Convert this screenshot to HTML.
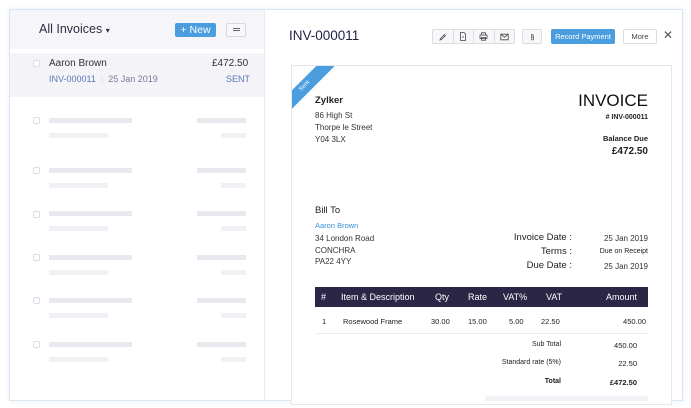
<!DOCTYPE html>
<html><head><meta charset="utf-8"><style>
*{margin:0;padding:0;box-sizing:border-box}
body{width:691px;height:408px;background:#fff;font-family:"Liberation Sans",sans-serif;position:relative;overflow:hidden;color:#222}
.a{position:absolute;white-space:nowrap}
.card{position:absolute;left:9px;top:9px;width:674px;height:392px;border:1px solid #dbe6f5;box-shadow:0 0 6px #e8eef8;background:#fff}
.sk{position:absolute;background:#e8e8ef;height:5px}
.sk2{position:absolute;background:#f0f0f5;height:5px}
.cb{position:absolute;width:7px;height:7px;border:1px solid #dcdcea;border-radius:2px;background:#fff}
.btn{position:absolute;top:29px;height:15px;border:1px solid #dcdce4;background:#f7f7fa;border-radius:2px}
.t{font-size:8px;color:#333}
.ic{flex:1;border-right:1px solid #dcdce4;display:flex;align-items:center;justify-content:center}
</style></head><body>
<div class="card"></div>
<div class="a" style="left:10px;top:10px;width:254px;height:39px;background:#f6f6fa"></div>
<div class="a" style="left:10px;top:53px;width:254px;height:44px;background:#f3f3f8"></div>
<div class="a" style="left:264px;top:10px;width:1px;height:390px;background:#ececf2"></div>
<div class="a" style="left:39px;top:22px;font-size:12.5px;color:#2c2c44">All Invoices <span style="font-size:8px">▾</span></div>
<div class="a" style="left:175px;top:23px;width:41px;height:14px;background:#4a9ee0;border-radius:2px;color:#fff;font-size:10.5px;line-height:14px;text-align:center">+ New</div>
<div class="a" style="left:226px;top:23px;width:20px;height:14px;border:1px solid #d8d8e0;background:#f8f8fa;border-radius:2px"><div style="position:absolute;left:6px;top:4px;width:7px;height:3px;border-top:1px solid #666;border-bottom:1px solid #666"></div></div>
<div class="cb" style="left:33px;top:60px"></div>
<div class="a" style="left:49px;top:58px;font-size:10px;color:#333">Aaron Brown</div>
<div class="a" style="left:212px;top:58px;font-size:10px;color:#333">£472.50</div>
<div class="a" style="left:49px;top:74px;font-size:9px;color:#5a78b8">INV-000011 <span style="color:#ddd">&nbsp;|&nbsp;</span> <span style="color:#7a7a99">25 Jan 2019</span></div>
<div class="a" style="left:226px;top:74px;font-size:9px;color:#5a78b8">SENT</div>

<div class="cb" style="left:33px;top:117px"></div><div class="sk" style="left:49px;top:118px;width:83px"></div><div class="sk2" style="left:49px;top:133px;width:59px"></div><div class="sk" style="left:197px;top:118px;width:49px"></div><div class="sk2" style="left:221px;top:133px;width:25px"></div>
<div class="cb" style="left:33px;top:167px"></div><div class="sk" style="left:49px;top:168px;width:83px"></div><div class="sk2" style="left:49px;top:183px;width:59px"></div><div class="sk" style="left:197px;top:168px;width:49px"></div><div class="sk2" style="left:221px;top:183px;width:25px"></div>
<div class="cb" style="left:33px;top:211px"></div><div class="sk" style="left:49px;top:211px;width:83px"></div><div class="sk2" style="left:49px;top:226px;width:59px"></div><div class="sk" style="left:197px;top:211px;width:49px"></div><div class="sk2" style="left:221px;top:226px;width:25px"></div>
<div class="cb" style="left:33px;top:254px"></div><div class="sk" style="left:49px;top:255px;width:83px"></div><div class="sk2" style="left:49px;top:270px;width:59px"></div><div class="sk" style="left:197px;top:255px;width:49px"></div><div class="sk2" style="left:221px;top:270px;width:25px"></div>
<div class="cb" style="left:33px;top:297px"></div><div class="sk" style="left:49px;top:298px;width:83px"></div><div class="sk2" style="left:49px;top:313px;width:59px"></div><div class="sk" style="left:197px;top:298px;width:49px"></div><div class="sk2" style="left:221px;top:313px;width:25px"></div>
<div class="cb" style="left:33px;top:341px"></div><div class="sk" style="left:49px;top:342px;width:83px"></div><div class="sk2" style="left:49px;top:357px;width:59px"></div><div class="sk" style="left:197px;top:342px;width:49px"></div><div class="sk2" style="left:221px;top:357px;width:25px"></div>

<div class="a" style="left:289px;top:28px;font-size:13.5px;color:#232348">INV-000011</div>
<div class="btn" style="left:432px;width:83px;display:flex">
<div class="ic"><svg width="8" height="8" viewBox="0 0 8 8"><path d="M1 7 L1.5 5.5 L5.5 1.5 L6.5 2.5 L2.5 6.5 Z" fill="none" stroke="#444" stroke-width=".8"/></svg></div>
<div class="ic"><svg width="8" height="9" viewBox="0 0 8 9"><path d="M1.5 .5 H5 L6.5 2 V8.5 H1.5 Z M3 5 H5" fill="none" stroke="#444" stroke-width=".8"/></svg></div>
<div class="ic"><svg width="9" height="9" viewBox="0 0 9 9"><path d="M2.5 3 V.8 H6.5 V3 M1 3 H8 V6.5 H1 Z M2.5 5.5 H6.5 V8.2 H2.5 Z" fill="none" stroke="#444" stroke-width=".8"/></svg></div>
<div class="ic" style="border:none"><svg width="9" height="8" viewBox="0 0 9 8"><path d="M.8 1.2 H8.2 V6.8 H.8 Z M.8 1.2 L4.5 4.2 L8.2 1.2" fill="none" stroke="#444" stroke-width=".8"/></svg></div></div>
<div class="btn" style="left:522px;width:20px;display:flex;align-items:center;justify-content:center"><svg width="5" height="8" viewBox="0 0 5 8"><path d="M3.5 2.5 V6 A1 1 0 0 1 1.5 6 V1.8 A.8 .8 0 0 1 3 1.8 V5.5" fill="none" stroke="#555" stroke-width=".7"/></svg></div>
<div class="a" style="left:551px;top:29px;width:64px;height:15px;background:#4a9ee0;border-radius:2px;color:#fff;font-size:7.5px;line-height:15px;text-align:center">Record Payment</div>
<div class="btn" style="left:623px;width:34px;background:#fff;font-size:7.5px;line-height:13px;text-align:center;color:#444">More</div>
<div class="a" style="left:663px;top:28px;font-size:12px;color:#555">✕</div>

<div class="a" style="left:291px;top:65px;width:381px;height:340px;border:1px solid #e6e6ec;background:#fff;overflow:hidden">
<div style="position:absolute;left:-22px;top:14px;width:70px;height:13px;background:#4a9ee0;transform:rotate(-45deg);color:#fff;font-size:6px;line-height:13px;text-align:center">Sent</div>
</div>
<div class="a" style="left:315px;top:95px;font-size:9.5px;font-weight:bold;color:#222">Zylker</div>
<div class="a t" style="left:315px;top:111px">86 High St</div>
<div class="a t" style="left:315px;top:123px">Thorpe le Street</div>
<div class="a t" style="left:315px;top:135px">Y04 3LX</div>
<div class="a" style="right:43px;top:91px;font-size:17px;color:#111">INVOICE</div>
<div class="a" style="right:43px;top:114px;font-size:7px;font-weight:bold">#&nbsp;INV-000011</div>
<div class="a" style="right:43px;top:134px;font-size:7.5px;font-weight:bold">Balance Due</div>
<div class="a" style="right:43px;top:146px;font-size:10px;font-weight:bold">£472.50</div>
<div class="a" style="left:315px;top:205px;font-size:9.5px;color:#222">Bill To</div>
<div class="a" style="left:315px;top:221px;font-size:7.5px;color:#3a8fd8">Aaron Brown</div>
<div class="a t" style="left:315px;top:234px">34 London Road</div>
<div class="a t" style="left:315px;top:246px">CONCHRA</div>
<div class="a t" style="left:315px;top:257px">PA22 4YY</div>
<div class="a" style="right:119px;top:232px;font-size:9.5px;color:#222">Invoice Date :</div>
<div class="a" style="right:119px;top:246px;font-size:9.5px;color:#222">Terms :</div>
<div class="a" style="right:119px;top:260px;font-size:9.5px;color:#222">Due Date :</div>
<div class="a t" style="right:43px;top:234px">25 Jan 2019</div>
<div class="a" style="right:43px;top:248px;font-size:7px">Due on Receipt</div>
<div class="a t" style="right:43px;top:262px">25 Jan 2019</div>
<div class="a" style="left:315px;top:287px;width:333px;height:20px;background:#2b2546"></div>
<div class="a" style="left:321px;top:292px;font-size:9px;color:#fff">#</div>
<div class="a" style="left:341px;top:292px;font-size:9px;color:#fff">Item &amp; Description</div>
<div class="a" style="left:435px;top:292px;font-size:9px;color:#fff">Qty</div>
<div class="a" style="left:468px;top:292px;font-size:9px;color:#fff">Rate</div>
<div class="a" style="left:503px;top:292px;font-size:9px;color:#fff">VAT%</div>
<div class="a" style="left:546px;top:292px;font-size:9px;color:#fff">VAT</div>
<div class="a" style="right:54px;top:292px;font-size:9px;color:#fff">Amount</div>
<div class="a" style="left:322px;top:317px;font-size:7.5px">1</div>
<div class="a" style="left:343px;top:317px;font-size:7.5px">Rosewood Frame</div>
<div class="a" style="left:431px;top:317px;font-size:7.5px">30.00</div>
<div class="a" style="left:468px;top:317px;font-size:7.5px">15.00</div>
<div class="a" style="left:509px;top:317px;font-size:7.5px">5.00</div>
<div class="a" style="left:541px;top:317px;font-size:7.5px">22.50</div>
<div class="a" style="right:45px;top:317px;font-size:7.5px">450.00</div>
<div class="a" style="left:315px;top:333px;width:333px;height:1px;background:#eee"></div>
<div class="a" style="right:130px;top:341px;font-size:7px">Sub Total</div>
<div class="a" style="right:54px;top:341px;font-size:7.5px">450.00</div>
<div class="a" style="right:130px;top:359px;font-size:7px">Standard rate (5%)</div>
<div class="a" style="right:54px;top:359px;font-size:7.5px">22.50</div>
<div class="a" style="right:130px;top:378px;font-size:7px;font-weight:bold">Total</div>
<div class="a" style="right:54px;top:378px;font-size:7.5px;font-weight:bold">£472.50</div>
<div class="a" style="left:485px;top:396px;width:163px;height:5px;background:#f3f3f7"></div>
</body></html>
